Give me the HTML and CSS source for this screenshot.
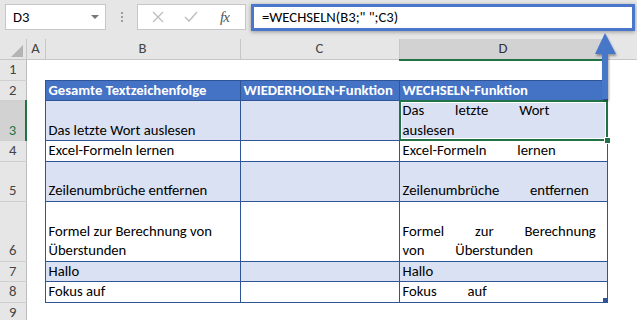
FILE: index.html
```html
<!DOCTYPE html>
<html lang="de">

<head>
    <meta charset="UTF-8">
    <title>WECHSELN-Funktion</title>
    <link rel="stylesheet" href="styles.css">
</head>

<body>
    <div class="formula-bar">
        <div class="name-box"><span>D3</span><span class="caret"></span></div>
        <div class="grip"><i></i><i></i><i></i></div>
        <div class="fx-buttons">
            <svg class="icon-x" width="12" height="12" viewBox="0 0 12 12">
                <path d="M1 1 L11 11 M11 1 L1 11" stroke="#bdbdbd" stroke-width="1.3" fill="none" />
            </svg>
            <svg class="icon-ok" width="14" height="12" viewBox="0 0 14 12">
                <path d="M1 6 L5 10 L13 1" stroke="#c2c2c2" stroke-width="1.6" fill="none" />
            </svg>
            <span class="icon-fx">fx</span>
        </div>
        <div class="formula">=WECHSELN(B3;" ";C3)</div>
    </div>

    <table class="sheet">
        <colgroup>
            <col class="c-rows">
            <col class="c-a">
            <col class="c-b">
            <col class="c-c">
            <col class="c-d">
            <col class="c-e">
        </colgroup>
        <thead>
            <tr class="r20">
                <th class="colhead corner"><span class="tri"></span></th>
                <th class="colhead">A</th>
                <th class="colhead">B</th>
                <th class="colhead">C</th>
                <th class="colhead sel">D</th>
                <th class="colhead last"></th>
            </tr>
        </thead>
        <tbody>
            <tr class="r20">
                <th class="rowhead">1</th>
                <td></td><td></td><td></td><td></td><td></td>
            </tr>
            <tr class="r20 head-row">
                <th class="rowhead">2</th>
                <td></td>
                <td class="tb">Gesamte Textzeichenfolge</td>
                <td class="tb">WIEDERHOLEN-Funktion</td>
                <td class="tb">WECHSELN-Funktion</td>
                <td></td>
            </tr>
            <tr class="r40 band">
                <th class="rowhead sel">3</th>
                <td></td>
                <td class="tb">Das letzte Wort auslesen</td>
                <td class="tb"></td>
                <td class="tb spaced active">Das letzte Wort auslesen</td>
                <td></td>
            </tr>
            <tr class="r20">
                <th class="rowhead">4</th>
                <td></td>
                <td class="tb">Excel-Formeln lernen</td>
                <td class="tb"></td>
                <td class="tb spaced">Excel-Formeln lernen</td>
                <td></td>
            </tr>
            <tr class="r40 band">
                <th class="rowhead">5</th>
                <td></td>
                <td class="tb">Zeilenumbrüche entfernen</td>
                <td class="tb"></td>
                <td class="tb spaced">Zeilenumbrüche entfernen</td>
                <td></td>
            </tr>
            <tr class="r60">
                <th class="rowhead">6</th>
                <td></td>
                <td class="tb">Formel zur Berechnung von Überstunden</td>
                <td class="tb"></td>
                <td class="tb spaced">Formel zur Berechnung von Überstunden</td>
                <td></td>
            </tr>
            <tr class="r20 band">
                <th class="rowhead">7</th>
                <td></td>
                <td class="tb">Hallo</td>
                <td class="tb"></td>
                <td class="tb spaced">Hallo</td>
                <td></td>
            </tr>
            <tr class="r20">
                <th class="rowhead">8</th>
                <td></td>
                <td class="tb">Fokus auf</td>
                <td class="tb"></td>
                <td class="tb spaced table-end">Fokus auf</td>
                <td></td>
            </tr>
            <tr class="r20">
                <th class="rowhead">9</th>
                <td></td><td></td><td></td><td></td><td></td>
            </tr>
        </tbody>
    </table>

    <!-- Pfeil von D3 zur Bearbeitungsleiste -->
    <svg class="arrow" width="30" height="74" viewBox="0 0 30 74">
        <defs>
            <filter id="shadow" x="-50%" y="-20%" width="200%" height="150%">
                <feDropShadow dx="1" dy="2" stdDeviation="1.2" flood-color="#000" flood-opacity="0.35" />
            </filter>
        </defs>
        <g filter="url(#shadow)" fill="#4777c8">
            <polygon points="11,3 1,24 22,24" />
            <rect x="8" y="23" width="6" height="46" />
        </g>
    </svg>
</body>

</html>
```

FILE: styles.css
```css
body {
    margin: 0;
    width: 637px;
    height: 320px;
    overflow: hidden;
    position: relative;
    background: #fff;
    font-family: Carlito, "Liberation Sans", sans-serif;
    font-size: 14.67px;
    color: #000;
}

/* Bearbeitungsleiste */
.formula-bar {
    height: 39px;
    box-sizing: border-box;
    padding: 4px 2px 0 5px;
    display: flex;
    align-items: flex-start;
    background: #e6e6e6;
}

.name-box {
    width: 101px;
    height: 26px;
    box-sizing: border-box;
    padding: 0 6px 0 7px;
    display: flex;
    align-items: center;
    justify-content: space-between;
    background: #fff;
    border: 1px solid #c6c6c6;
}

.caret {
    border-left: 4px solid transparent;
    border-right: 4px solid transparent;
    border-top: 4px solid #777;
}

.grip {
    width: 31px;
    padding-top: 8px;
    display: flex;
    flex-direction: column;
    align-items: center;
    gap: 2px;
}

.grip i {
    width: 2px;
    height: 2px;
    background: #9c9c9c;
}

.fx-buttons {
    width: 109px;
    height: 26px;
    box-sizing: border-box;
    display: flex;
    align-items: center;
    background: #fff;
    border: 1px solid #c6c6c6;
}

.icon-x {
    margin-left: 14px;
}

.icon-ok {
    margin-left: 20px;
}

.icon-fx {
    margin-left: 22px;
    font-family: "Liberation Serif", serif;
    font-style: italic;
    font-size: 15px;
    color: #555;
    letter-spacing: -1px;
}

.formula {
    margin-left: 5px;
    width: 384px;
    height: 27px;
    box-sizing: border-box;
    padding-left: 8px;
    line-height: 21px;
    background: #fff;
    border: 3px solid #4a77c9;
    box-shadow: 0 1px 4px rgba(0, 0, 0, .35);
}

/* Tabellenblatt */
.sheet {
    width: 637px;
    border-collapse: collapse;
    table-layout: fixed;
}

.c-rows { width: 26px; }
.c-a { width: 19px; }
.c-b { width: 195px; }
.c-c { width: 159px; }
.c-d { width: 208px; }
.c-e { width: 30px; }

.r20 { height: 20px; }
.r40 { height: 40px; }
.r60 { height: 60px; }

th,
td {
    padding: 0 3px;
    line-height: 19.5px;
    overflow: hidden;
}

.colhead {
    padding: 0;
    font-weight: normal;
    color: #444;
    text-align: center;
    vertical-align: middle;
    background: #e6e6e6;
    border-right: 1px solid #c6c6c6;
    border-bottom: 1px solid #c6c6c6;
}

.colhead.sel {
    background: #d2d2d2;
    color: #333;
    border-bottom: 2px solid #217346;
}

.colhead.last {
    border-right: none;
}

.corner {
    position: relative;
}

.tri {
    position: absolute;
    right: 3px;
    bottom: 2px;
    border-left: 12px solid transparent;
    border-bottom: 12px solid #b4b4b4;
}

.rowhead {
    padding: 0;
    font-weight: normal;
    color: #444;
    text-align: center;
    vertical-align: bottom;
    background: #e6e6e6;
    border-right: 1px solid #bdbdbd;
    border-bottom: 1px solid #cfcfcf;
}

.rowhead.sel {
    background: #d2d2d2;
    color: #217346;
    border-right: 2px solid #217346;
}

td {
    vertical-align: bottom;
}

.tb {
    border: 1px solid #2f5597;
}

.head-row .tb {
    background: #4472c4;
    color: #fff;
    font-weight: bold;
}

.band .tb {
    background: #d9e1f2;
}

.spaced {
    word-spacing: 27.5px;
}

.active {
    position: relative;
    overflow: visible;
}

.active::after {
    content: "";
    position: absolute;
    left: -1px;
    top: -1px;
    right: -1px;
    bottom: -1px;
    border: 2px solid #217346;
    box-shadow: inset 0 0 0 1px #fff;
}

.active::before {
    content: "";
    position: absolute;
    right: -4px;
    bottom: -4px;
    width: 5px;
    height: 5px;
    background: #217346;
    border: 1px solid #fff;
    z-index: 1;
}

.table-end {
    position: relative;
}

.table-end::after {
    content: "";
    position: absolute;
    right: 0;
    bottom: 0;
    width: 4px;
    height: 4px;
    background: #2f5597;
}

.arrow {
    position: absolute;
    left: 594px;
    top: 30px;
}
```
